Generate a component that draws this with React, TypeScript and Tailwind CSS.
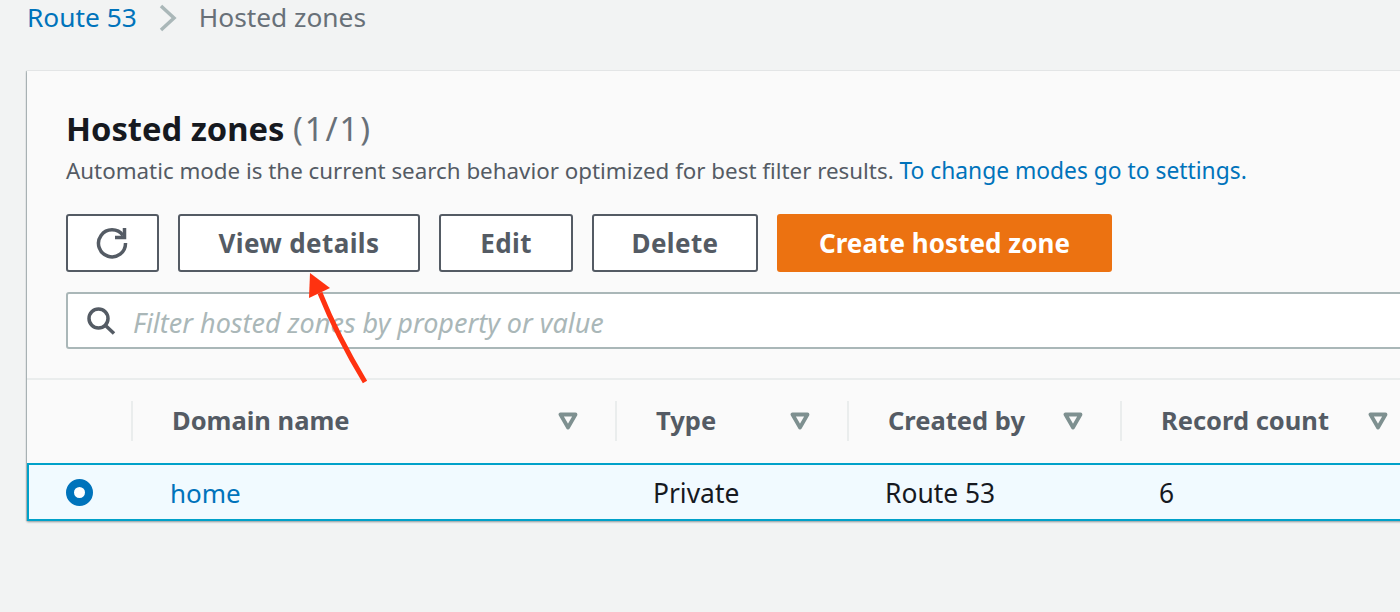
import React from 'react';

const font = "[font-family:'Noto_Sans',sans-serif]";

function Caret() {
  return (
    <svg width="20" height="18" viewBox="0 0 20 18" className="shrink-0">
      <path d="M2.5 2.5h15L10 15.5z" fill="none" stroke="#7e9090" strokeWidth="3.8" strokeLinejoin="round" />
    </svg>
  );
}

function Btn({ label, className }: { label: string; className: string }) {
  return (
    <button className={`h-[58px] rounded-[3px] border-2 border-[#545b64] bg-white text-[26px] font-bold tracking-[0.4px] text-[#545b64] ${className}`}>
      {label}
    </button>
  );
}

function HeadCell({ label, className }: { label: string; className: string }) {
  return (
    <div className={`flex h-10 items-center justify-between border-l-2 border-[#eaeded] pl-[39px] pr-[37px] ${className}`}>
      <span className="text-[25.5px] font-bold text-[#545b64]">{label}</span>
      <Caret />
    </div>
  );
}

export default function App() {
  return (
    <div className={`h-[612px] w-[1400px] overflow-hidden bg-[#f2f3f3] ${font}`}>
      <div className="flex h-[71px] items-start pl-[27px] text-[26.3px] leading-[34px]">
        <a className="text-[#0073bb]">Route 53</a>
        <svg width="20" height="30" viewBox="0 0 20 30" className="ml-[21px] mr-[21px] mt-[3px]">
          <path d="M3 3l13 12L3 27" fill="none" stroke="#aab7b8" strokeWidth="3.5" />
        </svg>
        <span className="text-[#687078]">Hosted zones</span>
      </div>

      <div className="relative ml-[27px] h-[450px] w-[1500px] bg-[#fafafa] shadow-[0_1px_2px_rgba(0,28,36,0.4),-1px_0_1px_rgba(0,28,36,0.2)]">
        <div className="h-[309px] border-b-2 border-[#eaeded] pl-[39px] pt-[37px]">
          <h1 className="text-[32.7px] font-bold leading-[42px] text-[#16191f]">
            Hosted zones <span className="font-normal tracking-[2px] text-[#687078]">(1/1)</span>
          </h1>
          <p className="mt-[6px] text-[22.35px] leading-[30px] text-[#545b64]">
            Automatic mode is the current search behavior optimized for best filter results.{' '}
            <a className="text-[22.8px] text-[#0073bb]">To change modes go to settings.</a>
          </p>
          <div className="mt-[28px] flex gap-[19px]">
            <button className="flex h-[58px] w-[93px] items-center justify-center rounded-[3px] border-2 border-[#545b64] bg-white">
              <svg width="34" height="34" viewBox="0 0 34 34" fill="none" stroke="#545b64" strokeWidth="3.5" className="-ml-[2px]">
                <path d="M28 9.5A13.5 13.5 0 1 0 30.5 17" />
                <path d="M29.5 2v9.5H20" />
              </svg>
            </button>
            <Btn label="View details" className="w-[242px]" />
            <Btn label="Edit" className="w-[134px]" />
            <Btn label="Delete" className="w-[166px]" />
            <button className="h-[58px] w-[335px] rounded-[3px] bg-[#ec7211] text-[26px] font-bold tracking-[0.05px] text-white">
              Create hosted zone
            </button>
          </div>
          <div className="mt-[20px] flex h-[57px] items-center rounded-[3px] border-2 border-[#aab7b8] bg-white pl-[18px]">
            <svg width="32" height="32" viewBox="0 0 32 32" fill="none" stroke="#545b64" strokeWidth="3.5" className="-ml-[1px] mr-px">
              <circle cx="13.5" cy="13.5" r="9.5" />
              <path d="M20.5 20.5l8.5 8" />
            </svg>
            <span className="ml-[15px] pt-[5px] text-[27px] italic text-[#aab7b8]">Filter hosted zones by property or value</span>
          </div>
        </div>

        <div className="flex h-[83px] items-center pb-[2px] pl-[104px]">
          <HeadCell label="Domain name" className="w-[484px]" />
          <HeadCell label="Type" className="w-[232px]" />
          <HeadCell label="Created by" className="w-[273px]" />
          <HeadCell label="Record count" className="w-[305px]" />
        </div>

        <div className="flex h-[58px] items-center border-2 border-[#00a1c9] bg-[#f1faff] text-[26.4px]">
          <div className="ml-[37px] h-[27px] w-[27px] rounded-full border-[8px] border-[#0073bb] bg-white" />
          <a className="ml-[77px] w-[483px] pt-[3px] text-[26px] text-[#0073bb]">home</a>
          <span className="w-[232px] pt-[3px] text-[#16191f]">Private</span>
          <span className="w-[274px] pt-[3px] text-[#16191f]">Route 53</span>
          <span className="pt-[3px] text-[#16191f]">6</span>
        </div>

        {/* red annotation arrow */}
        <svg width="80" height="120" viewBox="0 0 80 120" className="absolute left-[270px] top-[195px]">
          <path d="M23 27Q40.5 70.5 68 116" fill="none" stroke="#ff3210" strokeWidth="5" />
          <path d="M13 7L33 22 12 32z" fill="#ff3210" />
        </svg>
      </div>
    </div>
  );
}
